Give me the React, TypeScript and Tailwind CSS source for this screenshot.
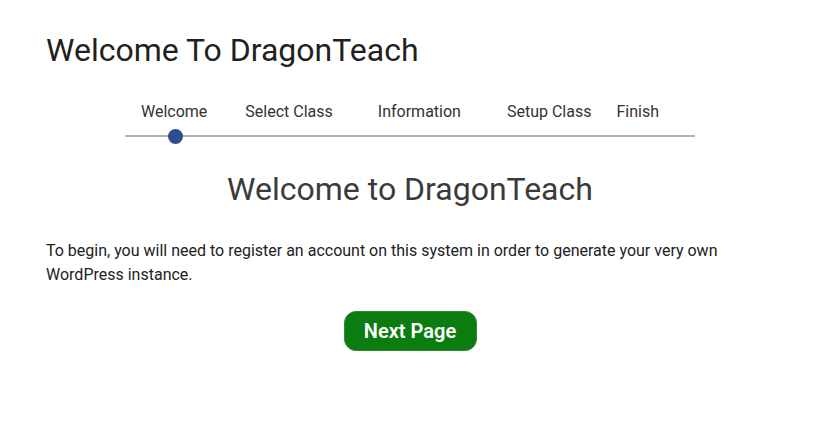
const steps = [
  { label: "Welcome", ml: "ml-[16px]" },
  { label: "Select Class", ml: "ml-[38px]" },
  { label: "Information", ml: "ml-[45px]" },
  { label: "Setup Class", ml: "ml-[46px]" },
  { label: "Finish", ml: "ml-[25px]" },
];

export default function App() {
  return (
    <div className="min-h-screen w-full bg-white font-['Roboto',sans-serif] pl-[46px] pr-[41px] pt-[31px]">
      <h1 className="text-[32px] leading-[38px] text-[#231f20]">Welcome To DragonTeach</h1>

      {/* stepper */}
      <div className="mx-auto mt-[31px] w-[570px]">
        <div className="flex text-[16px] leading-[24px] text-[#333]">
          {steps.map((s) => (
            <span key={s.label} className={s.ml}>
              {s.label}
            </span>
          ))}
        </div>
        <div className="relative mt-[11px] h-[2px] bg-[#b3b3b3]">
          <span className="absolute left-[43px] top-[-6px] h-[15px] w-[15px] rounded-full bg-[#2d4d8e]" />
        </div>
      </div>

      <h2 className="mt-[33px] text-center text-[32px] leading-[38px] text-[#3b3b3b]">
        Welcome to DragonTeach
      </h2>

      <p className="mt-[31px] text-[16px] leading-[24px] text-[#222]">
        To begin, you will need to register an account on this system in order to generate your very own
        WordPress instance.
      </p>

      <div className="mt-[24px] flex justify-center">
        <button className="h-[40px] w-[133px] rounded-[12px] border border-[#2f8a32] bg-[#0b7d10] text-[20px] font-semibold text-white">
          Next Page
        </button>
      </div>
    </div>
  );
}
